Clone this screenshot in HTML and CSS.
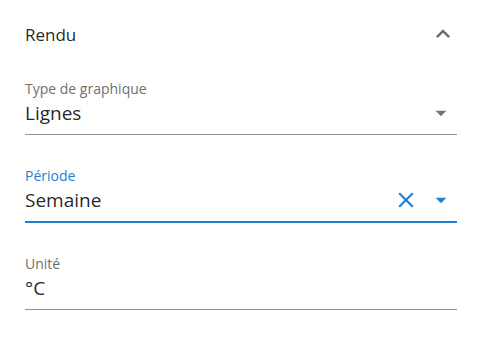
FILE: index.html
```html
<!DOCTYPE html>
<html lang="fr">
<head>
	<meta charset="UTF-8">
	<title>Rendu</title>
	<link rel="stylesheet" href="styles.css">
</head>
<body>
	<div class="panel">
		<div class="panel-head">
			<span class="panel-title">Rendu</span>
			<svg class="chevron" width="28" height="28" viewBox="0 0 24 24"><path d="M7.41 15.41 12 10.83l4.59 4.58L18 14l-6-6-6 6z" fill="#6b6b6b"/></svg>
		</div>
		<div class="panel-body">
			<div class="field">
				<div class="field-label">Type de graphique</div>
				<div class="field-row">
					<span class="field-value">Lignes</span>
					<svg class="caret" width="26" height="26" viewBox="0 0 24 24"><path d="M7 10l5 5 5-5z" fill="#757575"/></svg>
				</div>
			</div>
			<div class="field focused">
				<div class="field-label">Période</div>
				<div class="field-row">
					<span class="field-value">Semaine</span>
					<svg class="clear" width="26" height="26" viewBox="0 0 24 24"><path d="M19 6.41 17.59 5 12 10.59 6.41 5 5 6.41 10.59 12 5 17.59 6.41 19 12 13.41 17.59 19 19 17.59 13.41 12z" fill="#1e7fd6"/></svg>
					<svg class="caret" width="26" height="26" viewBox="0 0 24 24"><path d="M7 10l5 5 5-5z" fill="#1e7fd6"/></svg>
				</div>
			</div>
			<div class="field">
				<div class="field-label">Unité</div>
				<div class="field-row">
					<span class="field-value">°C</span>
				</div>
			</div>
		</div>
	</div>
</body>
</html>
```

FILE: styles.css
```css
*{
	margin: 0;
	padding: 0;
	box-sizing: border-box;
}
body{
	background: #fff;
	font-family: "Open Sans", "Noto Sans", sans-serif;
	color: rgba(0,0,0,0.87);
}
.panel{
	width: 483px;
	padding: 0 26px 0 25px;
}
.panel-head{
	height: 68px;
	display: flex;
	align-items: center;
	justify-content: space-between;
}
.panel-title{
	font-size: 17px;
}
.chevron{
	margin-right: 0;
}
.panel-body{
	display: flex;
	flex-direction: column;
	gap: 33px;
	padding-top: 13px;
}
.field{
	border-bottom: 1px solid #949494;
}
.field-label{
	font-size: 14px;
	color: #6f6f6f;
	line-height: 16px;
}
.field-row{
	display: flex;
	align-items: center;
	height: 32px;
	margin-bottom: 5px;
	gap: 9px;
}
.field-value{
	flex: 1;
	font-size: 19px;
}
.caret{
	margin-right: 3px;
}
.focused{
	border-bottom: 2px solid #1e7fd6;
}
.focused .field-label{
	color: #1e7fd6;
}
```
